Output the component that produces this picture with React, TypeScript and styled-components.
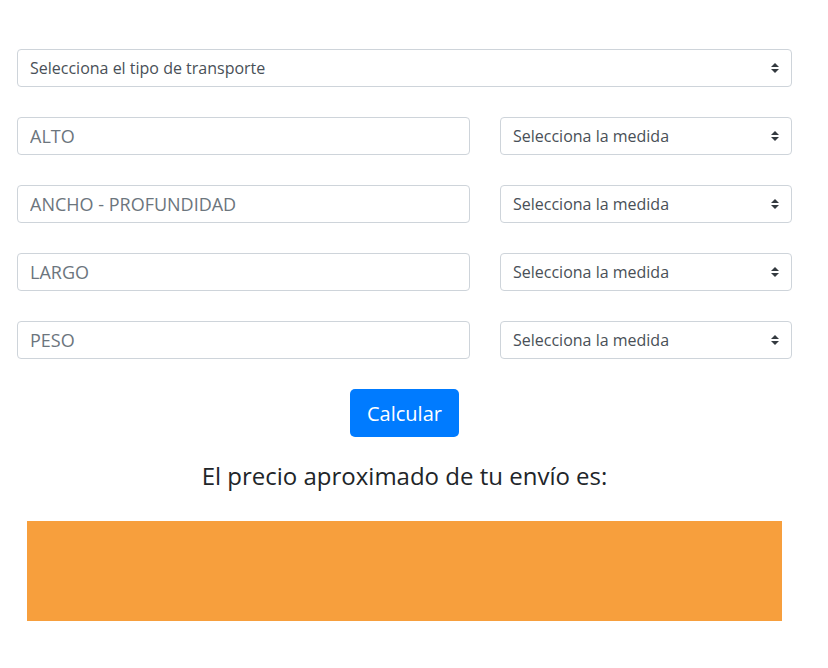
import React from "react";
import styled, { createGlobalStyle } from "styled-components";

const Global = createGlobalStyle`
  html, body { margin: 0; padding: 0; background: #fff; }
  body { font-family: "Open Sans", "Noto Sans", sans-serif; color: #212529; }
  * { box-sizing: border-box; }
`;

const Page = styled.div`
  width: 828px;
  padding: 49px 36px 0 17px;
  display: flex;
  flex-direction: column;
`;

const Form = styled.form`
  display: flex;
  flex-direction: column;
  gap: 30px;
`;

const Row = styled.div`
  display: grid;
  grid-template-columns: 453px 292px;
  column-gap: 30px;
`;

const SelectWrap = styled.div`
  position: relative;
  width: 100%;
`;

const Select = styled.select`
  appearance: none;
  -webkit-appearance: none;
  width: 100%;
  height: 38px;
  padding: 0 28px 0 12px;
  border: 1px solid #ced4da;
  border-radius: 4px;
  background: #fff;
  color: #495057;
  font-family: "Open Sans", sans-serif;
  font-size: 16px;
  outline: none;
`;

const Arrow = styled.svg`
  position: absolute;
  right: 13px;
  top: 14px;
  width: 8px;
  height: 10px;
  pointer-events: none;
`;

const Input = styled.input`
  width: 100%;
  height: 38px;
  padding: 0 12px;
  border: 1px solid #ced4da;
  border-radius: 4px;
  font-family: "Open Sans", sans-serif;
  font-size: 18px;
  color: #495057;
  outline: none;
  &::placeholder { color: #6c757d; opacity: 1; }
`;

const ButtonRow = styled.div`
  display: flex;
  justify-content: center;
`;

const Button = styled.button`
  height: 48px;
  padding: 0 17px;
  background: #007bff;
  color: #fff;
  border: none;
  border-radius: 5px;
  font-family: "Open Sans", sans-serif;
  font-size: 20px;
  cursor: pointer;
`;

const Heading = styled.h3`
  margin: 25px 0 0;
  text-align: center;
  font-size: 24px;
  font-weight: 400;
  line-height: 1.2;
  color: #212529;
`;

const Result = styled.div`
  margin: 30px 10px 0;
  height: 100px;
  background: #f79f3d;
`;

const CustomSelect: React.FC<{ label: string }> = ({ label }) => (
  <SelectWrap>
    <Select defaultValue="">
      <option value="">{label}</option>
    </Select>
    <Arrow viewBox="0 0 4 5">
      <path d="M2 0L0 2h4zm0 5L0 3h4z" fill="#343a40" />
    </Arrow>
  </SelectWrap>
);

const fields = ["ALTO", "ANCHO - PROFUNDIDAD", "LARGO", "PESO"];

export default function App() {
  return (
    <>
      <Global />
      <Page>
        <Form onSubmit={(e) => e.preventDefault()}>
          <CustomSelect label="Selecciona el tipo de transporte" />
          {fields.map((f) => (
            <Row key={f}>
              <Input placeholder={f} />
              <CustomSelect label="Selecciona la medida" />
            </Row>
          ))}
          <ButtonRow>
            <Button type="submit">Calcular</Button>
          </ButtonRow>
        </Form>
        <Heading>El precio aproximado de tu envío es:</Heading>
        <Result />
      </Page>
    </>
  );
}
